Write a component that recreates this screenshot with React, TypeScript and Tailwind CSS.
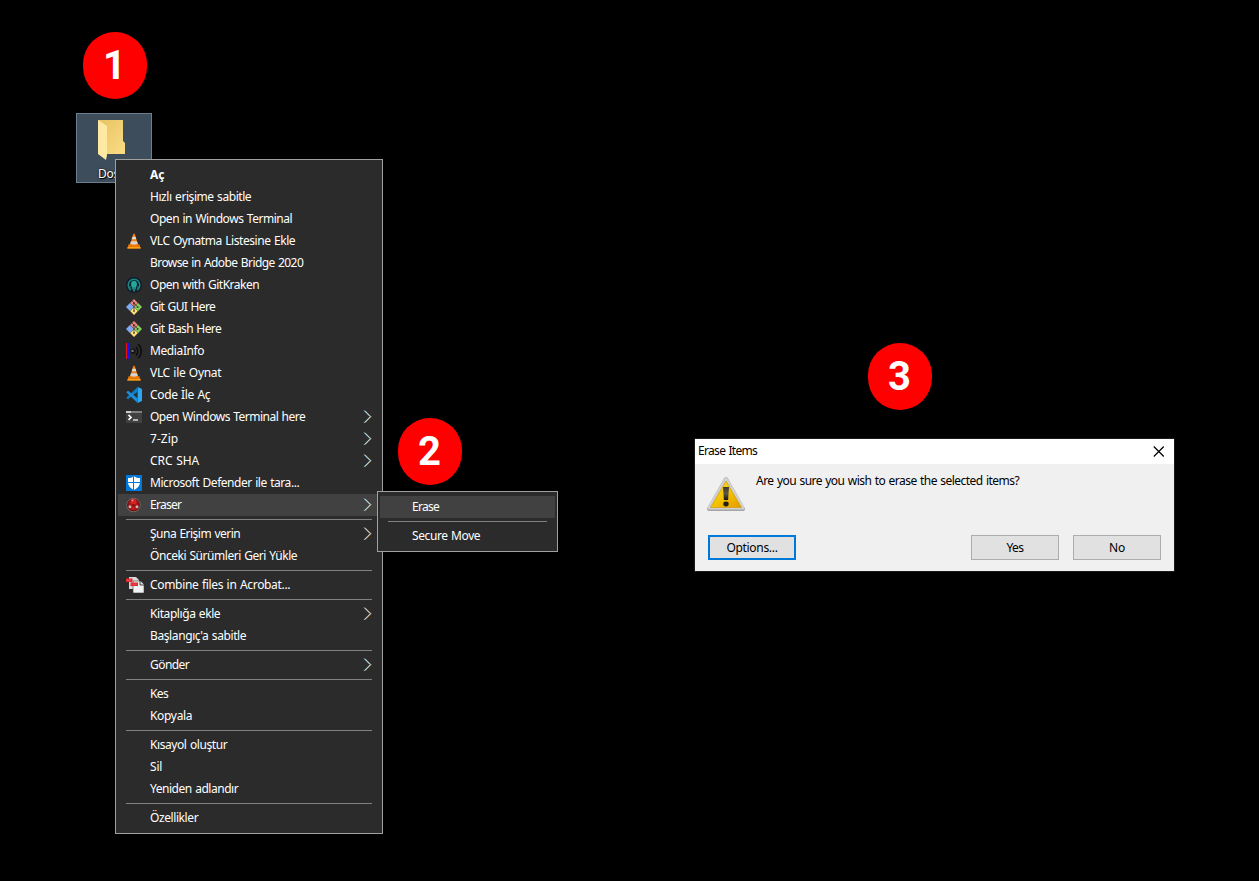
import { useLayoutEffect, useRef, type ReactNode } from 'react';

// Text run whose tracking is computed so that it spans `w` pixels.
function Label({ text, w, className = '' }: { text: string; w: number; className?: string }) {
  const ref = useRef<HTMLSpanElement>(null);
  useLayoutEffect(() => {
    const el = ref.current;
    if (!el) return;
    el.style.letterSpacing = '0px';
    const natural = el.getBoundingClientRect().width;
    el.style.letterSpacing = `${(w + 0.2 - natural) / text.length}px`;
  }, [text, w]);
  return (
    <span ref={ref} className={`inline-block [word-spacing:0.7px] whitespace-pre ${className}`}>
      {text}
    </span>
  );
}

function Svg({ children, w = 16 }: { children: ReactNode; w?: number }) {
  return (
    <svg width={w} height="16" viewBox={`0 0 ${w} 16`} className="shrink-0">
      {children}
    </svg>
  );
}

const Vlc = () => (
  <Svg>
    <path d="M2.6 11.2h10.8l1.2 4.3H1.4z" fill="#e8760a" />
    <path d="M1.6 14.1h12.8l.3 1.5H1.3z" fill="#ffa01a" />
    <path d="M7.3.8h1.4l3.3 11c-1.4 1.400-6.600 1.400-8 0z" fill="#f57c08" />
    <path d="M6.500 3.700h3l.8 2.500H5.700z" fill="#dcdcdc" />
    <path d="M5 8.300h6l.8 2.500c-1.500 1-6.100 1-7.600 0z" fill="#d4d4d4" />
  </Svg>
);

const Kraken = () => (
  <Svg>
    <circle cx="8" cy="8" r="8" fill="#131b2b" />
    <path d="M5 13A5.800 5.800 0 1 1 11 13" fill="none" stroke="#1b8a82" strokeWidth="1.500" />
    <path d="M8 3.800c2 0 3 1.700 3 3.500 0 1.200-.6 1.900-.9 2.900v2H9.200v-2h-.5v4.300H7.300v-4.300h-.5v2H5.900v-2C5.600 9.200 5 8.500 5 7.300c0-1.800 1-3.500 3-3.500z" fill="#1faa9b" />
    <path d="M4 9v2.500M12 9v2.500" stroke="#1b8a82" />
  </Svg>
);

const Git = () => (
  <Svg>
    <path d="M8 0l3.900 3.900L8 7.800 4.100 3.900z" fill="#f0837a" />
    <path d="M3.900 4.100L7.800 8l-3.900 3.900L0 8z" fill="#80a9f5" />
    <path d="M12.100 4.100L16 8l-3.900 3.900L8.200 8z" fill="#84cf5e" />
    <path d="M8 8.200l3.900 3.900L8 16l-3.900-3.900z" fill="#fbe07c" />
    <path d="M5.800 1.800l5.700 5.700M8 4.500v7.500" stroke="#4a3a38" strokeWidth=".8" fill="none" />
    <circle cx="8" cy="4.300" r="1" fill="#3b2e2c" />
    <circle cx="8" cy="12" r="1" fill="#6b5f38" />
    <circle cx="11.600" cy="7.900" r="1" fill="#35452c" />
  </Svg>
);

const Media = () => (
  <Svg>
    <path d="M.5 0v16" stroke="#f01010" />
    <path d="M2.500 0v16" stroke="#1414f0" />
    <circle cx="7" cy="8.200" r="2.700" fill="#151515" />
    <circle cx="6.500" cy="7.900" r="1.200" fill="#777" />
    <path d="M10 4c2.300 2.500 2.300 6 0 8.500M12 1.200c4.300 3.300 4.300 11 0 14" stroke="#0c0c0c" strokeWidth="1.500" fill="none" />
  </Svg>
);

const Code = () => (
  <Svg>
    <path d="M11.600 0L16 2v12l-4.400 2z" fill="#2aa7f3" />
    <path d="M11.600 0v4.800L2 12.200.2 10.800z" fill="#0f7cc6" />
    <path d="M11.600 16v-4.800L2 3.800.2 5.200z" fill="#1b8fdb" />
  </Svg>
);

const Term = () => (
  <Svg>
    <path d="M0 2h16v12H0z" fill="#404040" />
    <path d="M0 2h16v2H0z" fill="#808080" />
    <path d="M0 2h5v2H0z" fill="#ccc" />
    <path d="M2.500 5.900l2.600 2.500-2.600 2.500" fill="none" stroke="#fff" strokeWidth="1.500" />
    <path d="M7 11h5" stroke="#eee" strokeWidth="1.300" />
  </Svg>
);

const Shield = () => (
  <Svg>
    <path d="M0 0h16v16H0z" fill="#0078d7" />
    <path d="M8 1.200c1.700 1.300 3.700 1.900 6 1.900V7c0 3.800-2.500 6.300-6 8-3.500-1.700-6-4.200-6-8V3.100c2.300 0 4.300-.6 6-1.900z" fill="#fff" />
    <path d="M7.500 1v14M1 7.500h14" stroke="#0078d7" strokeWidth="1" />
  </Svg>
);

const EraserIcon = () => (
  <Svg>
    <circle cx="7.500" cy="8" r="6.700" fill="#a01818" stroke="#777" strokeWidth=".9" />
    <circle cx="7.500" cy="8" r="5.800" fill="none" stroke="#6a0e0e" />
    <ellipse cx="7.500" cy="4.800" rx="3" ry="3" fill="#d62222" />
    <circle cx="6.500" cy="3.300" r="1.100" fill="#ee8585" />
    <circle cx="4" cy="9.800" r="1.500" fill="#c9b5b5" />
    <circle cx="11" cy="9.800" r="1.500" fill="#c9b5b5" />
    <path d="M7.500 7.500l1.600 5.500H5.900z" fill="#c81a1a" />
    <circle cx="7.500" cy="8.200" r="1" fill="#7c0c0c" />
  </Svg>
);

const Acrobat = () => (
  <Svg w={18}>
    <path d="M3 0h7l3 3v9H3z" fill="#d9d9d9" />
    <path d="M7 4h7.500L18 7.500V16H7z" fill="#f2f2f2" stroke="#3a3a3a" strokeWidth=".6" />
    <path d="M14 4v4h4" fill="#ddd" stroke="#444" />
    <path d="M0 1.500h6.500V5H0z" fill="#e3262c" />
    <path d="M4.500 5.500H12V9H4.500z" fill="#e3262c" />
    <path d="M1 3.200h4.500M5.500 7.200H11" stroke="#f3797b" strokeWidth=".5" />
  </Svg>
);

function Arrow({ warm }: { warm?: boolean }) {
  return (
    <svg width="9" height="14" viewBox="0 0 9 14" className="mr-2 shrink-0" fill="none">
      <path d="M1 .7l6 6-6 6" stroke="#3f9fec" strokeWidth=".9" />
      <path d="M2 .7l6 6-6 6" stroke="#e6a048" strokeWidth=".9" />
      <path d="M1.500.7l6 6-6 6" stroke={warm ? '#f8dcc0' : '#c8f4fa'} strokeWidth=".8" />
    </svg>
  );
}

type Entry = {
  t: string;
  w: number;
  icon?: ReactNode;
  arrow?: 'cool' | 'warm';
  bold?: boolean;
  on?: boolean;
} | null;

const mainMenu: Entry[] = [
  { t: 'Aç', w: 14, bold: true },
  { t: 'Hızlı erişime sabitle', w: 101 },
  { t: 'Open in Windows Terminal', w: 142 },
  { t: 'VLC Oynatma Listesine Ekle', w: 145, icon: <Vlc /> },
  { t: 'Browse in Adobe Bridge 2020', w: 153 },
  { t: 'Open with GitKraken', w: 109, icon: <Kraken /> },
  { t: 'Git GUI Here', w: 65, icon: <Git /> },
  { t: 'Git Bash Here', w: 71, icon: <Git /> },
  { t: 'MediaInfo', w: 54, icon: <Media /> },
  { t: 'VLC ile Oynat', w: 71, icon: <Vlc /> },
  { t: 'Code İle Aç', w: 60, icon: <Code /> },
  { t: 'Open Windows Terminal here', w: 155, icon: <Term />, arrow: 'cool' },
  { t: '7-Zip', w: 28, arrow: 'cool' },
  { t: 'CRC SHA', w: 49, arrow: 'cool' },
  { t: 'Microsoft Defender ile tara...', w: 149, icon: <Shield /> },
  { t: 'Eraser', w: 31, icon: <EraserIcon />, arrow: 'cool', on: true },
  null,
  { t: 'Şuna Erişim verin', w: 90, arrow: 'warm' },
  { t: 'Önceki Sürümleri Geri Yükle', w: 147 },
  null,
  { t: 'Combine files in Acrobat...', w: 140, icon: <Acrobat /> },
  null,
  { t: 'Kitaplığa ekle', w: 70, arrow: 'warm' },
  { t: "Başlangıç'a sabitle", w: 96 },
  null,
  { t: 'Gönder', w: 39, arrow: 'cool' },
  null,
  { t: 'Kes', w: 18 },
  { t: 'Kopyala', w: 42 },
  null,
  { t: 'Kısayol oluştur', w: 77 },
  { t: 'Sil', w: 12 },
  { t: 'Yeniden adlandır', w: 88 },
  null,
  { t: 'Özellikler', w: 48 },
];

const subMenu: Entry[] = [{ t: 'Erase', w: 27, on: true }, null, { t: 'Secure Move', w: 68 }];

function Menu({ items, className }: { items: Entry[]; className: string }) {
  return (
    <div className={`absolute border border-[#a0a0a0] bg-[#2b2b2b] px-[2px] py-1 text-white ${className}`}>
      {items.map((it, i) =>
        it ? (
          <div key={i} className={`flex h-[22px] items-center ${it.on ? 'bg-[#414141]' : ''}`}>
            <div className="ml-2 flex w-6 shrink-0 items-center">{it.icon}</div>
            <div className="flex-1">
              <Label text={it.t} w={it.w} className={it.bold ? 'font-bold' : ''} />
            </div>
            {it.arrow && <Arrow warm={it.arrow === 'warm'} />}
          </div>
        ) : (
          <div key={i} className="flex h-[7px] flex-col px-2 pt-[3px]">
            <div className="h-px bg-[#808080]" />
          </div>
        ),
      )}
    </div>
  );
}

function Step({ n, className }: { n: number; className: string }) {
  return (
    <div
      className={`absolute flex h-[67px] w-16 items-center justify-center rounded-full bg-[#ff0000] pr-px font-['Roboto'] text-[40px] leading-none font-bold text-white ${className}`}
    >
      {n}
    </div>
  );
}

function Button({ t, w, className = 'border border-[#adadad]' }: { t: string; w: number; className?: string }) {
  return (
    <button className={`flex h-[25px] w-[88px] items-center justify-center bg-[#e1e1e1] ${className}`}>
      <Label text={t} w={w} />
    </button>
  );
}

function Warning() {
  return (
    <svg width="40" height="36" viewBox="0 0 40 36" className="shrink-0">
      <defs>
        <linearGradient id="warn-fill" x1="0" y1="0" x2="1" y2="1">
          <stop offset="0" stopColor="#f7d84a" />
          <stop offset=".5" stopColor="#f5c400" />
          <stop offset="1" stopColor="#e39a00" />
        </linearGradient>
        <linearGradient id="warn-mark" x1="0" y1="0" x2="0" y2="1">
          <stop offset="0" stopColor="#3c3a34" />
          <stop offset=".5" stopColor="#5b5747" />
          <stop offset="1" stopColor="#16130c" />
        </linearGradient>
      </defs>
      <path d="M20 3L37 33H3z" fill="#a5a5a5" stroke="#a5a5a5" strokeWidth="4" strokeLinejoin="round" />
      <path d="M20 2.700L37 32H3z" fill="#d2d2d2" stroke="#d2d2d2" strokeWidth="3" strokeLinejoin="round" />
      <path d="M20 5L35.500 31.500h-31z" fill="url(#warn-fill)" stroke="#d0a018" strokeWidth=".8" strokeLinejoin="round" />
      <path d="M17 11h6l-.9 13h-4.200z" fill="url(#warn-mark)" />
      <ellipse cx="20" cy="28" rx="2.700" ry="2.400" fill="#25200f" />
    </svg>
  );
}

export default function App() {
  return (
    <div className="relative h-[881px] w-[1259px] overflow-hidden bg-black font-['Noto_Sans',sans-serif] text-[12px] leading-[16px]">
      <Step n={1} className="top-[32px] left-[83px]" />
      <div className="absolute top-[113px] left-[76px] flex h-[70px] w-[76px] flex-col border border-[#6b7f90] bg-[#3e4d5c] pt-[5px] pl-[20px]">
        <svg width="30" height="44" viewBox="0 0 30 44">
          <defs>
            <linearGradient id="folder-back" x1="0" y1="0" x2="1" y2="1">
              <stop offset="0" stopColor="#e6c463" />
              <stop offset="1" stopColor="#fbdc84" />
            </linearGradient>
          </defs>
          <path d="M1 1h25v21l2 2v11H9z" fill="url(#folder-back)" />
          <path d="M1 1l9 6v29l-1 5-8-6z" fill="#ffe8a2" />
        </svg>
        <div className="mt-[3px] pl-px text-white [text-shadow:1px_1px_1px_#000,0_0_2px_#000]">
          <Label text="Dosya" w={33} />
        </div>
      </div>
      <Menu items={mainMenu} className="top-[159px] left-[115px] w-[268px]" />
      <Step n={2} className="top-[418px] left-[398px]" />
      <Menu items={subMenu} className="top-[491px] left-[377px] w-[181px]" />
      <Step n={3} className="top-[343px] left-[868px]" />
      <div className="absolute top-[439px] left-[695px] flex h-[132px] w-[479px] flex-col bg-[#f0f0f0] text-black outline outline-[#1a1a1a]">
        <div className="flex h-[25px] items-center justify-between bg-white pr-[10px] pb-px pl-[3px]">
          <Label text="Erase Items" w={59} />
          <svg width="11" height="11" viewBox="0 0 11 11">
            <path d="M.8.500l10 10M10.800.500l-10 10" stroke="#000" strokeWidth="1.200" />
          </svg>
        </div>
        <div className="flex flex-1 items-start pt-[12px] pl-[11px]">
          <Warning />
          <div className="-mt-[3px] pl-[10px]">
            <Label text="Are you sure you wish to erase the selected items?" w={263} />
          </div>
        </div>
        <div className="flex gap-[14px] pr-[13px] pb-[11px] pl-[13px]">
          <Button t="Options..." w={51} className="mr-auto border-2 border-[#0078d7]" />
          <Button t="Yes" w={17} />
          <Button t="No" w={16} />
        </div>
      </div>
    </div>
  );
}
